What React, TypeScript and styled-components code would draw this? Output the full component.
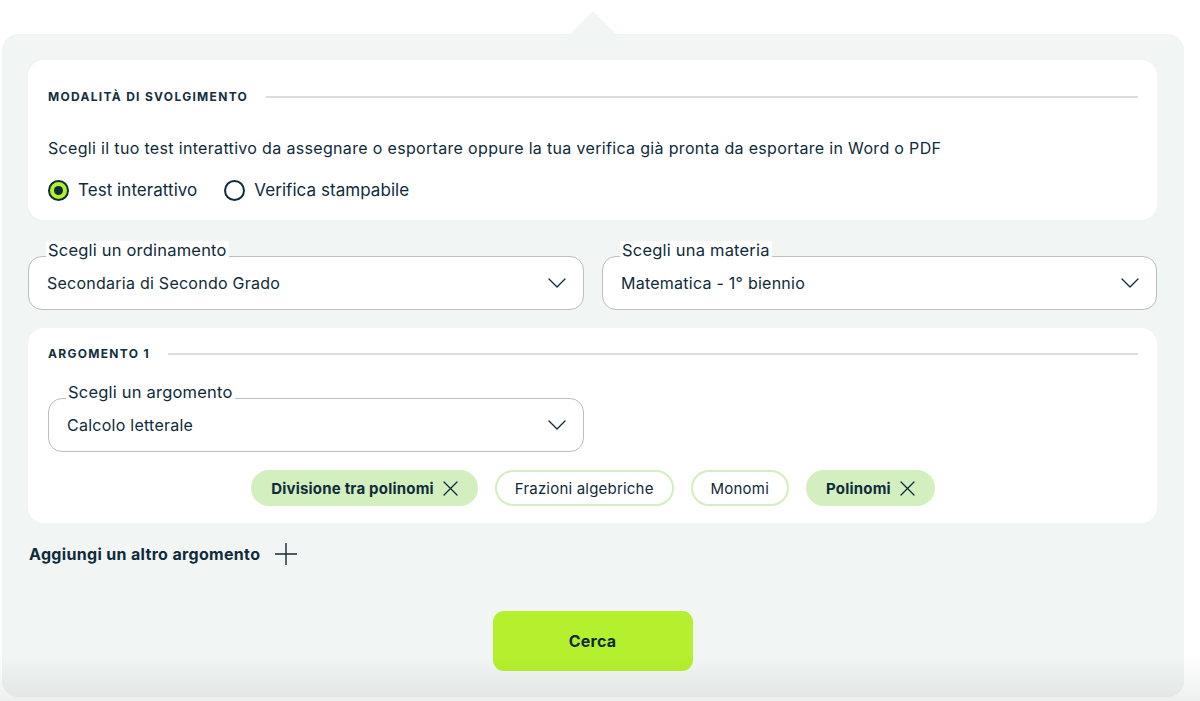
import React from "react";
import styled, { createGlobalStyle } from "styled-components";

const GlobalStyle = createGlobalStyle`
  html, body { margin: 0; padding: 0; background: #ffffff; }
  body { font-family: "Inter", "Noto Sans", sans-serif; color: #0f2b3a; }
  * { box-sizing: border-box; }
`;

const Page = styled.div`
  padding: 34px 16px 0 2px;
  width: 1200px;
  height: 701px;
  overflow: hidden;
  position: relative;
`;

const Panel = styled.div`
  position: relative;
  width: 1182px;
  background: #f1f5f4;
  border-radius: 16px;
  padding: 26px 27px 26px 26px;
  display: flex;
  flex-direction: column;
  &::before {
    content: "";
    position: absolute;
    top: -23px;
    left: 568px;
    width: 0;
    height: 0;
    border-left: 23px solid transparent;
    border-right: 23px solid transparent;
    border-bottom: 23px solid #f1f5f4;
  }
`;

const BottomShade = styled.div`
  position: absolute;
  left: 0;
  right: 0;
  bottom: 0;
  height: 46px;
  background: linear-gradient(to bottom, rgba(40, 50, 50, 0), rgba(40, 50, 50, 0.08));
  pointer-events: none;
`;

const Card = styled.section<{ $pt: number; $pb: number }>`
  background: #ffffff;
  border-radius: 16px;
  padding: ${(p) => p.$pt}px 19px ${(p) => p.$pb}px 20px;
  display: flex;
  flex-direction: column;
`;

const SectionTitle = styled.div`
  display: flex;
  align-items: center;
  gap: 18px;
  font-size: 12px;
  line-height: 18px;
  font-weight: 700;
  letter-spacing: 1.3px;
  text-transform: uppercase;
  color: #12303d;
  white-space: nowrap;
  &::after {
    content: "";
    flex: 1;
    height: 2px;
    background: #dadfde;
  }
`;

const Description = styled.p`
  margin: 30px 0 0;
  font-size: 16px;
  line-height: 24px;
  letter-spacing: 0.33px;
  color: #0f2b3a;
`;

const RadioRow = styled.div`
  margin-top: 18px;
  display: flex;
  align-items: center;
  gap: 27px;
`;

const RadioOption = styled.label`
  display: flex;
  align-items: center;
  gap: 9px;
  font-size: 17px;
  line-height: 24px;
  letter-spacing: 0.05px;
  cursor: pointer;
`;

const RadioDot = styled.span<{ $checked?: boolean }>`
  width: 21px;
  height: 21px;
  margin-top: 1px;
  border-radius: 50%;
  border: 2px solid #0f2b3a;
  background: ${(p) => (p.$checked ? "#b4f02e" : "#ffffff")};
  display: flex;
  align-items: center;
  justify-content: center;
  &::after {
    content: "";
    width: 9px;
    height: 9px;
    border-radius: 50%;
    background: ${(p) => (p.$checked ? "#0f2b3a" : "transparent")};
  }
`;

const SelectsRow = styled.div`
  margin-top: 36px;
  margin-bottom: 18px;
  display: grid;
  grid-template-columns: 556px 555px;
  gap: 18px;
`;

const Field = styled.div<{ $width?: number }>`
  position: relative;
  width: ${(p) => (p.$width ? `${p.$width}px` : "auto")};
`;

const FieldLabel = styled.span`
  position: absolute;
  top: -15px;
  left: 18px;
  padding: 0 2px;
  background: #ffffff;
  border-radius: 2px;
  font-size: 16.5px;
  line-height: 19px;
  letter-spacing: 0.2px;
  color: #0f2b3a;
`;

const SelectBox = styled.div`
  height: 54px;
  border: 1px solid #b9bebe;
  border-radius: 14px;
  background: #ffffff;
  padding: 0 17px 0 18px;
  display: flex;
  align-items: center;
  justify-content: space-between;
  font-size: 16px;
  letter-spacing: 0.25px;
  color: #0f2b3a;
`;

const ArgField = styled(Field)`
  margin-top: 35px;
`;

const Chips = styled.div`
  margin-top: 18px;
  display: flex;
  justify-content: center;
  gap: 17px;
`;

const Chip = styled.span<{ $active?: boolean }>`
  height: 36px;
  border-radius: 18px;
  display: inline-flex;
  align-items: center;
  gap: 9px;
  padding: 0 18px;
  font-size: 15px;
  letter-spacing: 0.2px;
  font-weight: ${(p) => (p.$active ? 700 : 400)};
  background: ${(p) => (p.$active ? "#d3efbf" : "#ffffff")};
  border: 2px solid #d3efbf;
  color: #0f2b3a;
`;

const AddRow = styled.div`
  margin-top: 19px;
  display: flex;
  align-items: center;
  gap: 15px;
  font-size: 16px;
  line-height: 24px;
  letter-spacing: 0.33px;
  font-weight: 700;
  color: #0f2b3a;
  padding-left: 1px;
`;

const SearchButton = styled.button`
  align-self: center;
  margin-top: 45px;
  width: 200px;
  height: 60px;
  border: none;
  border-radius: 11px;
  background: #b4f02e;
  font-family: inherit;
  font-size: 16px;
  font-weight: 700;
  letter-spacing: 0.2px;
  color: #0f2b3a;
  cursor: pointer;
`;

const Chevron = () => (
  <svg width="18" height="10" viewBox="0 0 18 10" fill="none">
    <path d="M1 1l8 8 8-8" stroke="#0f2b3a" strokeWidth="1.3" strokeLinecap="round" strokeLinejoin="round" />
  </svg>
);

const Cross = () => (
  <svg width="15" height="15" viewBox="0 0 15 15" fill="none">
    <path d="M1 1l13 13M14 1L1 14" stroke="#0f2b3a" strokeWidth="1.3" strokeLinecap="round" />
  </svg>
);

const Plus = () => (
  <svg width="22" height="22" viewBox="0 0 22 22" fill="none">
    <path d="M11 0v22M0 11h22" stroke="#0f2b3a" strokeWidth="1.4" />
  </svg>
);

const chips = [
  { label: "Divisione tra polinomi", active: true },
  { label: "Frazioni algebriche", active: false },
  { label: "Monomi", active: false },
  { label: "Polinomi", active: true },
];

export default function App() {
  return (
    <>
      <GlobalStyle />
      <Page>
        <Panel>
          <Card $pt={28} $pb={18}>
            <SectionTitle>Modalità di svolgimento</SectionTitle>
            <Description>
              Scegli il tuo test interattivo da assegnare o esportare oppure la tua verifica già pronta da esportare in Word o PDF
            </Description>
            <RadioRow>
              <RadioOption>
                <RadioDot $checked />
                Test interattivo
              </RadioOption>
              <RadioOption>
                <RadioDot />
                Verifica stampabile
              </RadioOption>
            </RadioRow>
          </Card>

          <SelectsRow>
            <Field>
              <FieldLabel>Scegli un ordinamento</FieldLabel>
              <SelectBox>
                Secondaria di Secondo Grado
                <Chevron />
              </SelectBox>
            </Field>
            <Field>
              <FieldLabel>Scegli una materia</FieldLabel>
              <SelectBox>
                Matematica - 1° biennio
                <Chevron />
              </SelectBox>
            </Field>
          </SelectsRow>

          <Card $pt={17} $pb={17}>
            <SectionTitle>Argomento 1</SectionTitle>
            <ArgField $width={536}>
              <FieldLabel>Scegli un argomento</FieldLabel>
              <SelectBox>
                Calcolo letterale
                <Chevron />
              </SelectBox>
            </ArgField>
            <Chips>
              {chips.map((c) => (
                <Chip key={c.label} $active={c.active}>
                  {c.label}
                  {c.active && <Cross />}
                </Chip>
              ))}
            </Chips>
          </Card>

          <AddRow>
            Aggiungi un altro argomento
            <Plus />
          </AddRow>

          <SearchButton>Cerca</SearchButton>
        </Panel>
        <BottomShade />
      </Page>
    </>
  );
}
